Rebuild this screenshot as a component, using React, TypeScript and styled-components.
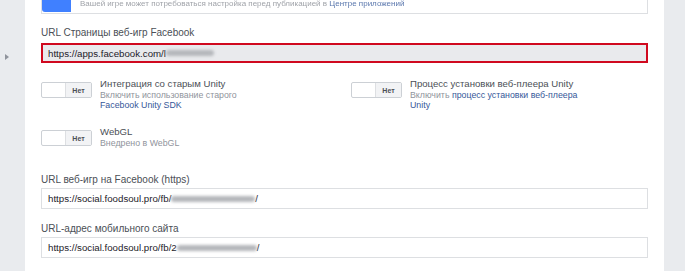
import React from "react";
import styled, { createGlobalStyle } from "styled-components";

const GlobalStyle = createGlobalStyle`
  body {
    margin: 0;
    font-family: "Liberation Sans", Arial, sans-serif;
    overflow: hidden;
  }
`;

const Page = styled.div`
  display: grid;
  grid-template-columns: 25px 1fr 21px;
  height: 271px;
  overflow: hidden;
`;

const Sidebar = styled.div`
  background: #e9ebee;
  padding: 54px 0 0 5px;
`;

const Caret = styled.div`
  width: 0;
  height: 0;
  border-top: 3px solid transparent;
  border-bottom: 3px solid transparent;
  border-left: 4px solid #90949c;
`;

const Rail = styled.div`
  background: #e9ebee;
`;

const Main = styled.div`
  background: #fff;
  padding: 0 16px;
  overflow: hidden;
`;

const Notice = styled.div`
  display: flex;
  gap: 9px;
  margin-top: -20px;
  height: 33px;
  border: 1px solid #dddfe2;
  border-top: none;
`;

const NoticeIcon = styled.div`
  width: 29px;
  height: 32px;
  background: #4080ff;
  border-radius: 0 0 0 3px;
`;

const NoticeText = styled.div`
  font-size: 8px;
  line-height: 8px;
  color: #a0a3a9;
  padding-top: 20px;
  filter: blur(0.5px);
  white-space: nowrap;

  a {
    color: #5a77ad;
    text-decoration: none;
  }
`;

const Label = styled.div<{ $top: number }>`
  margin-top: ${(p) => p.$top}px;
  font-size: 10px;
  line-height: 14px;
  color: #4b4f56;
`;

const Input = styled.div<{ $error?: boolean }>`
  box-sizing: border-box;
  margin-top: ${(p) => (p.$error ? 3 : 1)}px;
  height: ${(p) => (p.$error ? 20 : 21)}px;
  display: flex;
  align-items: center;
  padding-left: ${(p) => (p.$error ? 5 : 6)}px;
  font-size: 9.7px;
  color: #1d2129;
  background: ${(p) => (p.$error ? "#e9eaed" : "#fff")};
  border: ${(p) => (p.$error ? "2px solid #d0091f" : "1px solid #dddfe2")};
  white-space: nowrap;
`;

const Blurred = styled.span<{ $w: number }>`
  display: inline-block;
  width: ${(p) => p.$w}px;
  height: 6px;
  background: #b5b7bb;
  filter: blur(1.5px);
  border-radius: 3px;
`;

const OptionGrid = styled.div`
  display: grid;
  grid-template-columns: 310px 1fr;
  row-gap: 15px;
  margin-top: 14px;
`;

const Option = styled.div`
  display: flex;
  gap: 8px;
  align-items: flex-start;
`;

const Toggle = styled.div`
  margin-top: 5px;
  box-sizing: border-box;
  width: 51px;
  height: 16px;
  display: flex;
  border: 1px solid #ccd0d5;
  border-radius: 2px;
  background: #fff;
`;

const ToggleOff = styled.div`
  margin-left: auto;
  width: 25px;
  display: flex;
  align-items: center;
  justify-content: center;
  background: #f2f3f5;
  border-left: 1px solid #dddfe2;
  font-size: 7px;
  font-weight: bold;
  color: #4b4f56;
`;

const OptionText = styled.div<{ $w: number }>`
  width: ${(p) => p.$w}px;
`;

const OptionTitle = styled.div`
  font-size: 9.6px;
  line-height: 13px;
  color: #4b4f56;
`;

const OptionHint = styled.div`
  font-size: 8.8px;
  line-height: 10px;
  color: #90949c;

  a {
    color: #365899;
    text-decoration: none;
  }
`;

const Switch = () => (
  <Toggle>
    <ToggleOff>Нет</ToggleOff>
  </Toggle>
);

export default function App() {
  return (
    <>
      <GlobalStyle />
      <Page>
        <Sidebar>
          <Caret />
        </Sidebar>
        <Main>
          <Notice>
            <NoticeIcon />
            <NoticeText>
              Вашей игре может потребоваться настройка перед публикацией в{" "}
              <a href="#">Центре приложений</a>
            </NoticeText>
          </Notice>

          <Label $top={12}>URL Страницы веб-игр Facebook</Label>
          <Input $error>
            https://apps.facebook.com/l
            <Blurred $w={48} />
          </Input>

          <OptionGrid>
            <Option>
              <Switch />
              <OptionText $w={162}>
                <OptionTitle>Интеграция со старым Unity</OptionTitle>
                <OptionHint>
                  Включить использование старого <a href="#">Facebook Unity SDK</a>
                </OptionHint>
              </OptionText>
            </Option>
            <Option>
              <Switch />
              <OptionText $w={180}>
                <OptionTitle>Процесс установки веб-плеера Unity</OptionTitle>
                <OptionHint>
                  Включить <a href="#">процесс установки веб-плеера</a>{" "}
                  <a href="#">Unity</a>
                </OptionHint>
              </OptionText>
            </Option>
            <Option>
              <Switch />
              <OptionText $w={162}>
                <OptionTitle>WebGL</OptionTitle>
                <OptionHint>Внедрено в WebGL</OptionHint>
              </OptionText>
            </Option>
          </OptionGrid>

          <Label $top={25}>URL веб-игр на Facebook (https)</Label>
          <Input>
            https://social.foodsoul.pro/fb/
            <Blurred $w={84} />/
          </Input>

          <Label $top={13}>URL-адрес мобильного сайта</Label>
          <Input>
            https://social.foodsoul.pro/fb/2
            <Blurred $w={80} />/
          </Input>
        </Main>
        <Rail />
      </Page>
    </>
  );
}
